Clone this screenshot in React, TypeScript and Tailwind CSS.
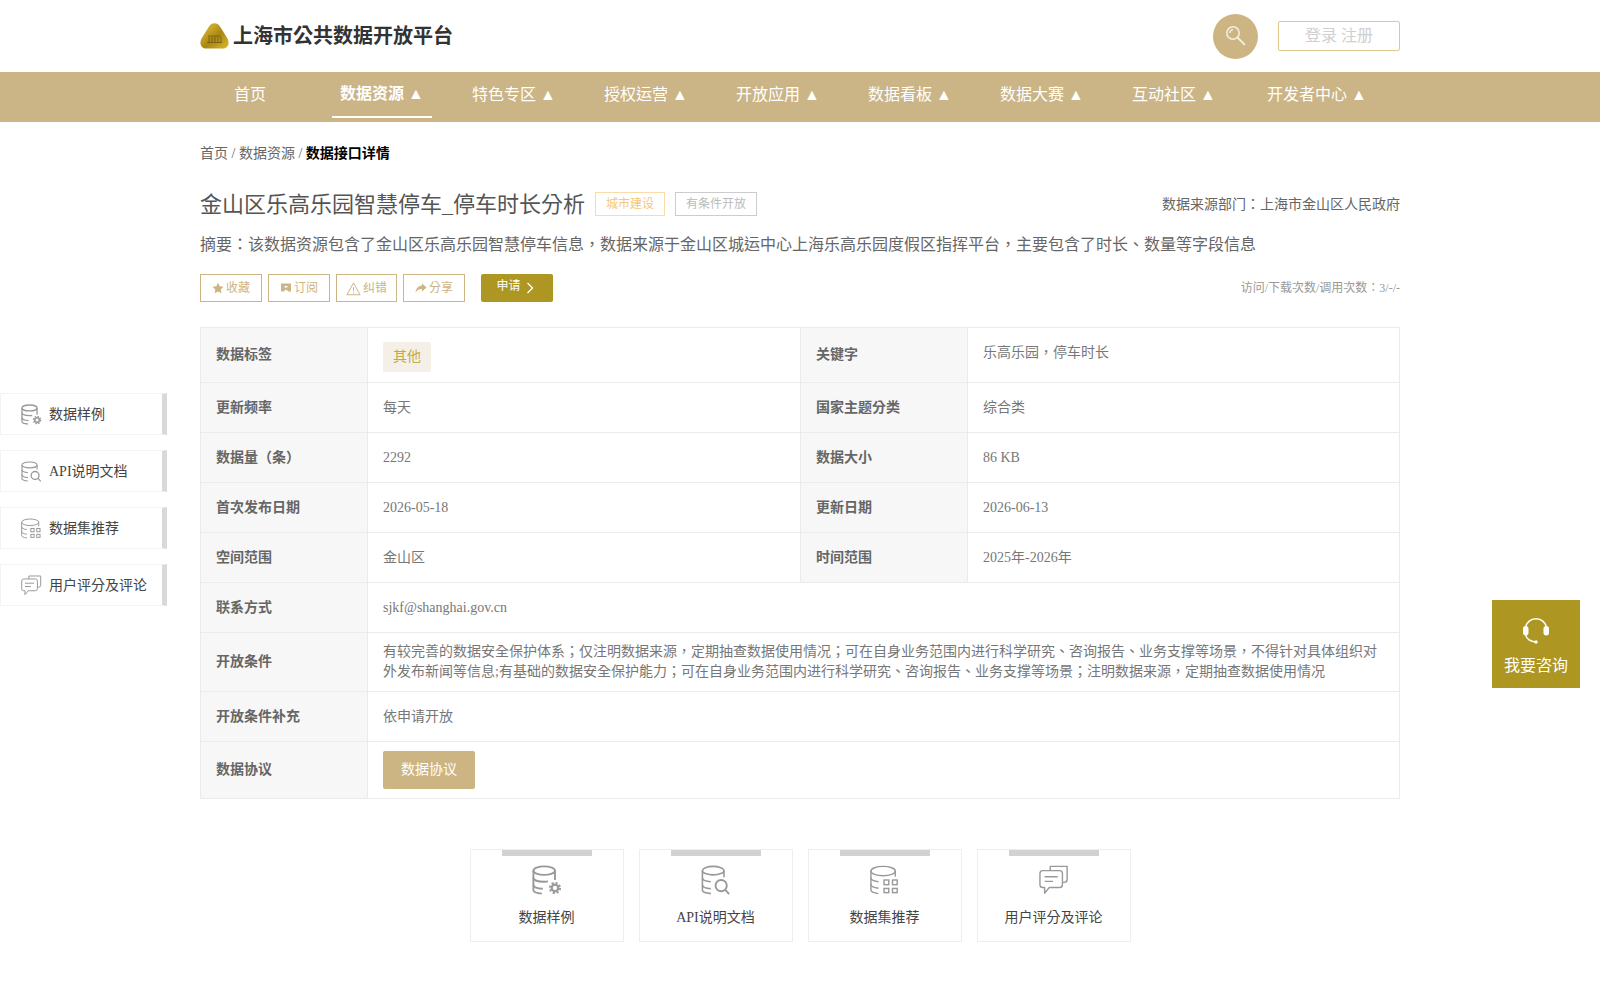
import type { ReactNode } from "react";

const navItems = ["首页", "数据资源 ▲", "特色专区 ▲", "授权运营 ▲", "开放应用 ▲", "数据看板 ▲", "数据大赛 ▲", "互动社区 ▲", "开发者中心 ▲"];

function SampleIcon({ className }: { className: string }) {
  return (
    <svg className={className} viewBox="0 0 32 32" fill="none" stroke="currentColor" strokeWidth="2">
      <ellipse cx="13" cy="6" rx="11.500" ry="4.500" />
      <path d="M1.500 6v21c0 1.800 3 3 9 3.500" />
      <path d="M24.500 6v10" />
      <path d="M1.500 13.500c0 2.400 4.600 4.300 11.500 4.300 1.500 0 2.800-.1 4-.3" />
      <path d="M1.500 21c0 2.400 4.400 4 10 4.300" />
      <circle cx="24.500" cy="24.500" r="3.500" strokeWidth="2.400" />
      <circle cx="24.500" cy="24.500" r="5.500" strokeWidth="2" strokeDasharray="2.300 2" />
    </svg>
  );
}

function ApiIcon({ className }: { className: string }) {
  return (
    <svg className={className} viewBox="0 0 32 32" fill="none" stroke="currentColor" strokeWidth="1.700">
      <ellipse cx="13" cy="6" rx="11.500" ry="4.500" />
      <path d="M1.500 6v21c0 1.800 3 3 9 3.500" />
      <path d="M24.500 6v7" />
      <path d="M1.500 13.500c0 2.400 4 4 9 4.300" />
      <path d="M1.500 21c0 2.400 4 4 9 4.300" />
      <circle cx="21.500" cy="22" r="6" strokeWidth="2" />
      <path d="M26 26.500l4 4.500" strokeWidth="2" />
    </svg>
  );
}

function RecommendIcon({ className }: { className: string }) {
  return (
    <svg className={className} viewBox="0 0 32 32" fill="none" stroke="currentColor" strokeWidth="1.500">
      <ellipse cx="14" cy="6.500" rx="13" ry="5" />
      <path d="M1 6.500v20c0 2 3 3.500 8 4" />
      <path d="M27 6.500v6" />
      <path d="M1 13.500c0 2 3 3.700 8 4.300" />
      <path d="M1 20.500c0 2 3 3.700 8 4.300" />
      <rect x="15" y="16" width="5" height="5" />
      <rect x="24" y="16" width="5" height="5" />
      <rect x="15" y="25" width="5" height="4.500" />
      <rect x="24" y="25" width="5" height="4.500" />
    </svg>
  );
}

function CommentIcon({ className }: { className: string }) {
  return (
    <svg className={className} viewBox="0 0 32 32" fill="none" stroke="currentColor" strokeWidth="1.500" strokeLinejoin="round">
      <path d="M12 6V1.500h18v14a3 3 0 0 1-3 3h-2" />
      <path d="M4 6h18a3 3 0 0 1 3 3v12a3 3 0 0 1-3 3H11l-5 6v-6H4a3 3 0 0 1-3-3V9a3 3 0 0 1 3-3z" />
      <path d="M6 12.500h14M6 17.500h9" />
    </svg>
  );
}

const sections = [
  { label: "数据样例", Icon: SampleIcon },
  { label: "API说明文档", Icon: ApiIcon },
  { label: "数据集推荐", Icon: RecommendIcon },
  { label: "用户评分及评论", Icon: CommentIcon },
];

function Label({ children, h }: { children: ReactNode; h: string }) {
  return <td className={`${h} border border-[#ebebeb] bg-[#f7f7f7] px-[15px] text-[14px] font-bold text-[#666]`}>{children}</td>;
}

function Value({ children, span, h }: { children: ReactNode; span?: number; h: string }) {
  return (
    <td colSpan={span} className={`${h} border border-[#ebebeb] px-[15px] text-[14px] leading-[20px] text-[#777]`}>
      {children}
    </td>
  );
}

function ActionButton({ icon, label, w = "w-[62px]" }: { icon: ReactNode; label: string; w?: string }) {
  return (
    <button type="button" className={`flex h-7 ${w} items-center justify-center gap-[2px] border border-[#cdb483] text-[12px] text-[#cdb483]`}>
      {icon}
      {label}
    </button>
  );
}

export default function App() {
  return (
    <div className="relative h-[1000px] overflow-hidden bg-white text-[#666]" style={{ fontFamily: '"Liberation Serif", "Noto Sans CJK TC", serif' }}>
      <header className="mx-auto flex h-[72px] w-[1200px] items-center justify-between">
        <div className="flex items-center gap-[4px]">
          <svg className="h-[26px] w-[29px]" viewBox="0 0 29 26">
            <defs>
              <linearGradient id="gold" x1="0" y1="0" x2="1" y2="1">
                <stop offset="0" stopColor="#e8c83c" />
                <stop offset="0.55" stopColor="#a98714" />
                <stop offset="1" stopColor="#dcb92a" />
              </linearGradient>
            </defs>
            <path d="M9 3.500C11 -1 18 -1 20 3.500l7.500 12c2.500 5 .5 10-4.500 10H6c-5 0-7-5-4.500-10z" fill="url(#gold)" />
            <path d="M8 13h13M9 14v5M12 14v5M15 14v5M18 14v5M21 14v5M7 19.500h15" stroke="#7d6410" strokeWidth="1" fill="none" />
          </svg>
          <span className="text-[20px] font-bold text-[#333]">上海市公共数据开放平台</span>
        </div>
        <div className="flex items-center gap-5">
          <div className="flex h-[45px] w-[45px] items-center justify-center rounded-full bg-[#cdb483]">
            <svg className="h-5 w-5" viewBox="0 0 20 20" fill="none" stroke="#f3ece0" strokeWidth="1.600">
              <circle cx="7" cy="7" r="6.200" />
              <path d="M11.500 11.500L19 19" strokeWidth="1.800" />
              <path d="M3.800 7A3.200 3.200 0 0 1 7 3.800" />
            </svg>
          </div>
          <button type="button" className="h-[30px] w-[122px] rounded-[2px] border border-[#e2c88f] text-[16px] text-[#cfcfcf]">
            登录 注册
          </button>
        </div>
      </header>

      <nav className="h-[50px] bg-[#cbb485]">
        <ul className="mx-auto flex h-full w-[1200px] gap-8 text-[16px] text-white">
          {navItems.map((item, i) => (
            <li
              key={item}
              className={`flex w-[100px] shrink-0 justify-center whitespace-nowrap ${i === 8 ? "w-[122px]" : ""} ${
                i === 1 ? "h-[46px] items-center border-b-2 border-white font-bold" : "items-center pb-[4px]"
              }`}
            >
              {item}
            </li>
          ))}
        </ul>
      </nav>

      <main className="mx-auto w-[1200px]">
        <div className="pt-[22px] text-[14px] leading-[20px] text-[#666]">
          首页 / 数据资源 / <span className="font-bold text-black">数据接口详情</span>
        </div>

        <div className="mt-[24px] flex h-[32px] items-center">
          <h1 className="text-[22px] font-normal text-[#555]">金山区乐高乐园智慧停车_停车时长分析</h1>
          <span className="ml-[10px] flex h-6 w-[70px] items-center justify-center border border-[#fbdca8] text-[12px] text-[#f5c67c]">城市建设</span>
          <span className="ml-[10px] flex h-6 w-[82px] items-center justify-center border border-[#ccc] text-[12px] text-[#bbb]">有条件开放</span>
          <span className="ml-auto text-[14px] text-[#666]">数据来源部门：上海市金山区人民政府</span>
        </div>

        <p className="mt-[13px] text-[16px] leading-[24px] text-[#666]">
          摘要：该数据资源包含了金山区乐高乐园智慧停车信息，数据来源于金山区城运中心上海乐高乐园度假区指挥平台，主要包含了时长、数量等字段信息
        </p>

        <div className="mt-[17px] flex h-7 items-center gap-[6px]">
          <ActionButton
            label="收藏"
            icon={
              <svg className="h-3 w-3" viewBox="0 0 24 24" fill="currentColor">
                <path d="M12 1.500l3.300 7 7.700 1-5.600 5.300 1.400 7.700-6.800-3.700-6.800 3.700 1.400-7.700L1 9.500l7.700-1z" />
              </svg>
            }
          />
          <ActionButton
            label="订阅"
            icon={
              <svg className="h-3 w-3" viewBox="0 0 24 24" fill="currentColor">
                <path d="M2 3h20v16h-6v-1l-4-3-4 3v1H2zM9 8v3h6V8z" fillRule="evenodd" />
              </svg>
            }
          />
          <ActionButton
            label="纠错"
            w="w-[61px]"
            icon={
              <svg className="h-[15px] w-[15px]" viewBox="0 0 24 24" fill="none" stroke="currentColor" strokeWidth="1.600">
                <path d="M12 3L1.500 22h21z" />
                <path d="M12 10v6M12 18v2" />
              </svg>
            }
          />
          <ActionButton
            label="分享"
            icon={
              <svg className="h-3 w-3" viewBox="0 0 24 24" fill="currentColor">
                <path d="M14 3l9 8-9 8v-5c-6 0-10 2-13 7 1-8 5-13 13-14z" />
              </svg>
            }
          />
          <button type="button" className="ml-[10px] flex h-7 w-[72px] items-center justify-center gap-[5px] rounded-[2px] bg-[#ae9623] pr-[4px] pb-[4px] text-[12px] text-white">
            申请
            <svg className="mt-[4px] h-3 w-2" viewBox="0 0 8 12" fill="none" stroke="currentColor" strokeWidth="1.300">
              <path d="M1.500 1l5 5-5 5" />
            </svg>
          </button>
          <span className="ml-auto text-[12px] text-[#999]">访问/下载次数/调用次数：3/-/-</span>
        </div>

        <table className="mt-[25px] w-[1199px] table-fixed border-collapse">
          <colgroup>
            <col className="w-[167px]" />
            <col className="w-[433px]" />
            <col className="w-[167px]" />
            <col className="w-[432px]" />
          </colgroup>
          <tbody>
            <tr>
              <Label h="h-[55px]">
                <span className="relative -top-[1px]">数据标签</span>
              </Label>
              <Value h="h-[55px]">
                <span className="mt-[4px] flex h-[30px] w-[48px] items-center justify-center rounded-[2px] bg-[#f4f0e8] text-[#c4a93c]">其他</span>
              </Value>
              <Label h="h-[55px]">
                <span className="relative -top-[1px]">关键字</span>
              </Label>
              <Value h="h-[55px]">
                <span className="relative -top-[2px]">乐高乐园，停车时长</span>
              </Value>
            </tr>
            <tr>
              <Label h="h-[50px]">更新频率</Label>
              <Value h="h-[50px]">每天</Value>
              <Label h="h-[50px]">国家主题分类</Label>
              <Value h="h-[50px]">综合类</Value>
            </tr>
            <tr>
              <Label h="h-[50px]">数据量（条）</Label>
              <Value h="h-[50px]">2292</Value>
              <Label h="h-[50px]">数据大小</Label>
              <Value h="h-[50px]">86 KB</Value>
            </tr>
            <tr>
              <Label h="h-[50px]">首次发布日期</Label>
              <Value h="h-[50px]">2026-05-18</Value>
              <Label h="h-[50px]">更新日期</Label>
              <Value h="h-[50px]">2026-06-13</Value>
            </tr>
            <tr>
              <Label h="h-[50px]">空间范围</Label>
              <Value h="h-[50px]">金山区</Value>
              <Label h="h-[50px]">时间范围</Label>
              <Value h="h-[50px]">2025年-2026年</Value>
            </tr>
            <tr>
              <Label h="h-[50px]">联系方式</Label>
              <Value h="h-[50px]" span={3}>
                sjkf@shanghai.gov.cn
              </Value>
            </tr>
            <tr>
              <Label h="h-[59px]">
                <span className="relative -top-[1px]">开放条件</span>
              </Label>
              <Value h="h-[59px]" span={3}>
                有较完善的数据安全保护体系；仅注明数据来源，定期抽查数据使用情况；可在自身业务范围内进行科学研究、咨询报告、业务支撑等场景，不得针对具体组织对外发布新闻等信息;有基础的数据安全保护能力；可在自身业务范围内进行科学研究、咨询报告、业务支撑等场景；注明数据来源，定期抽查数据使用情况
              </Value>
            </tr>
            <tr>
              <Label h="h-[50px]">开放条件补充</Label>
              <Value h="h-[50px]" span={3}>
                依申请开放
              </Value>
            </tr>
            <tr>
              <Label h="h-[57px]">
                <span className="relative -top-[1px]">数据协议</span>
              </Label>
              <Value h="h-[57px]" span={3}>
                <button type="button" className="flex h-[38px] w-[92px] items-center justify-center rounded-[2px] bg-[#cdb483] text-[14px] text-white">
                  数据协议
                </button>
              </Value>
            </tr>
          </tbody>
        </table>

        <div className="mt-[50px] flex justify-center gap-[15px]">
          {sections.map(({ label, Icon }) => (
            <div key={label} className="relative flex h-[93px] w-[154px] shrink-0 flex-col items-center border border-[#eee] pt-[15px] text-[14px] text-[#444]">
              <span className="absolute left-[31px] top-0 h-[6px] w-[90px] bg-[#d2d2d2]" />
              <Icon className="h-[30px] w-[30px] text-[#999]" />
              <span className="mt-[12px]">{label}</span>
            </div>
          ))}
        </div>
      </main>

      <aside className="absolute left-0 top-[393px] flex w-[167px] flex-col gap-[15px]">
        {sections.map(({ label, Icon }) => (
          <div key={label} className="flex h-[42px] items-center border border-[#f3f3f3] border-r-[5px] border-r-[#d9d9d9] pl-[20px] text-[14px] text-[#444]">
            <Icon className="h-[21px] w-[21px] text-[#999]" />
            <span className="ml-[7px] whitespace-nowrap">{label}</span>
          </div>
        ))}
      </aside>

      <div className="absolute left-[1492px] top-[600px] flex h-[88px] w-[88px] flex-col items-center bg-[#ae9623] pt-[18px] text-[16px] text-white">
        <svg className="h-[26px] w-[26px]" viewBox="0 0 26 26" fill="none" stroke="currentColor" strokeWidth="1.500">
          <path d="M2.500 10C3 4.500 7.500.8 13 .8s10 3.700 10.500 9.200" />
          <path d="M2.500 16c.5 4.500 4.500 8 10.500 8" />
          <circle cx="13" cy="24" r="1.700" fill="currentColor" stroke="none" />
          <rect x="0" y="8" width="5.500" height="9.500" rx="2.700" fill="currentColor" stroke="none" />
          <rect x="20.500" y="8" width="5.500" height="9.500" rx="2.700" fill="currentColor" stroke="none" />
        </svg>
        <span className="mt-[10px]">我要咨询</span>
      </div>
    </div>
  );
}
